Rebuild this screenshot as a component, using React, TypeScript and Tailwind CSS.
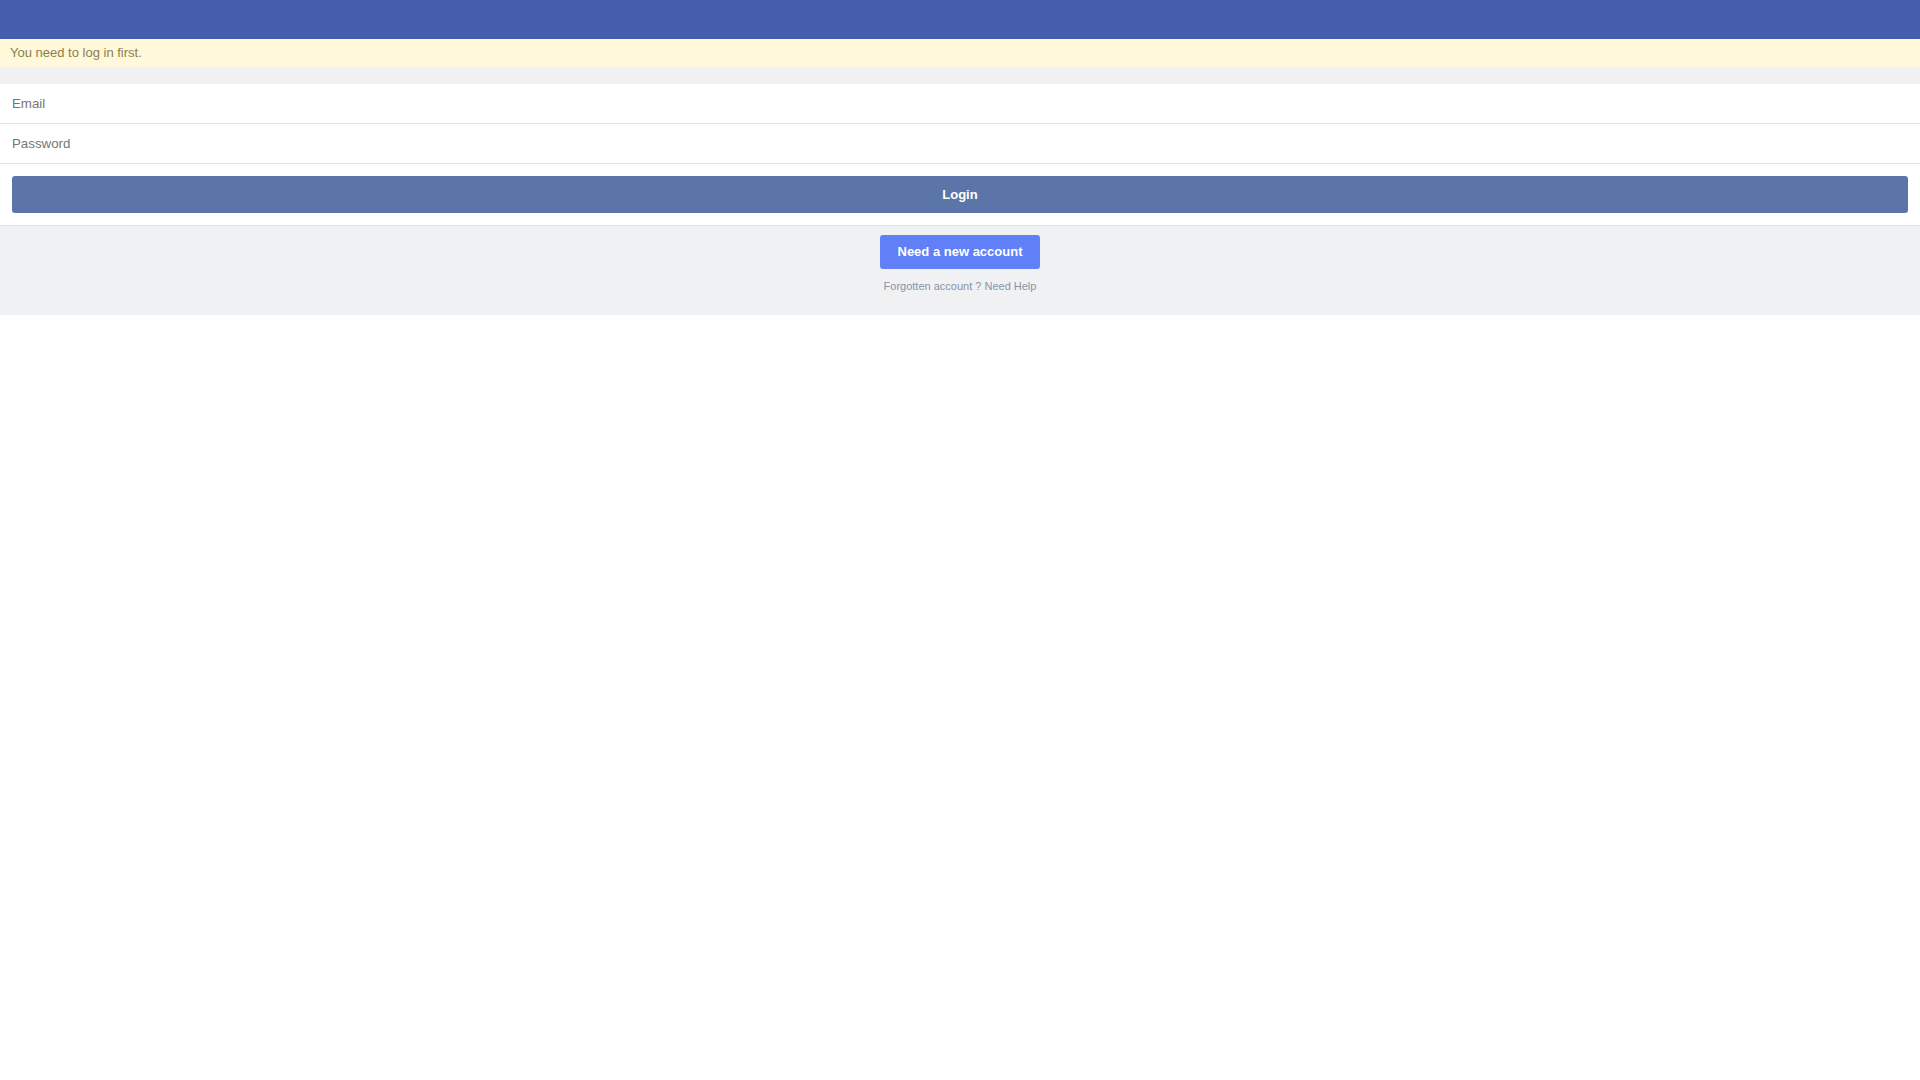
import React from "react";

export default function App() {
  return (
    <div className="w-full min-h-screen bg-white font-['Liberation_Sans',Arial,sans-serif]">
      <div className="h-[39px] bg-[#465dae]" />
      <div className="h-[28px] bg-[#fff8da] px-[10px] flex items-center text-[13px] text-[#8a7f4c]">
        You need to log in first.
      </div>
      <div className="h-[17px] bg-[#f0f1f3]" />
      <div className="bg-white">
        <div className="h-[40px] border-b border-[#e4e4e4] px-[12px] pt-[1px] flex items-center text-[13.3px] text-[#757575]">
          Email
        </div>
        <div className="h-[40px] border-b border-[#e4e4e4] px-[12px] pt-[1px] flex items-center text-[13.3px] text-[#757575]">
          Password
        </div>
        <div className="px-[12px] pt-[12px] pb-[12px] border-b border-[#e4e4e4]">
          <button className="w-full h-[37px] rounded-[3px] bg-[#5b75a8] text-white font-bold text-[13px] flex items-center justify-center">
            Login
          </button>
        </div>
      </div>
      <div className="h-[89px] bg-[#f0f1f3] flex flex-col items-center pt-[9px]">
        <button className="w-[160px] h-[34px] rounded-[3px] bg-[#6180f8] text-white font-bold text-[13px] flex items-center justify-center">
          Need a new account
        </button>
        <div className="mt-[9px] text-[11px] text-[#8a92a6]">
          Forgotten account ? Need Help
        </div>
      </div>
    </div>
  );
}
